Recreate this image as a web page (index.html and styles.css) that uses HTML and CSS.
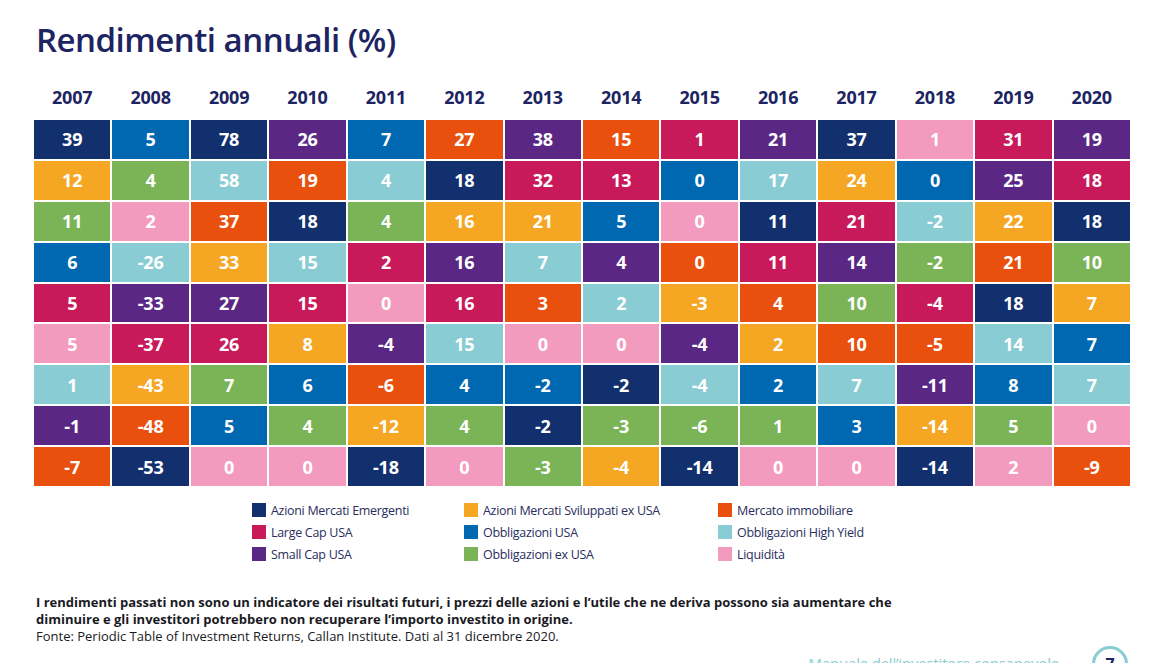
FILE: index.html
```html
<!DOCTYPE html>
<html lang="it">
<head>
<meta charset="utf-8">
<title>Rendimenti annuali (%)</title>
<link rel="stylesheet" href="styles.css">
</head>
<body>
<div class="page">
  <h1 class="title">Rendimenti annuali (%)</h1>

  <div class="years">
    <span>2007</span><span>2008</span><span>2009</span><span>2010</span><span>2011</span><span>2012</span><span>2013</span><span>2014</span><span>2015</span><span>2016</span><span>2017</span><span>2018</span><span>2019</span><span>2020</span>
  </div>

  <div class="grid">
    <!-- row 1 -->
    <div class="c em">39</div><div class="c ob">5</div><div class="c em">78</div><div class="c sc">26</div><div class="c ob">7</div><div class="c re">27</div><div class="c sc">38</div><div class="c re">15</div><div class="c lc">1</div><div class="c sc">21</div><div class="c em">37</div><div class="c lq">1</div><div class="c lc">31</div><div class="c sc">19</div>
    <!-- row 2 -->
    <div class="c dv">12</div><div class="c ox">4</div><div class="c hy">58</div><div class="c re">19</div><div class="c hy">4</div><div class="c em">18</div><div class="c lc">32</div><div class="c lc">13</div><div class="c ob">0</div><div class="c hy">17</div><div class="c dv">24</div><div class="c ob">0</div><div class="c sc">25</div><div class="c lc">18</div>
    <!-- row 3 -->
    <div class="c ox">11</div><div class="c lq">2</div><div class="c re">37</div><div class="c em">18</div><div class="c ox">4</div><div class="c dv">16</div><div class="c dv">21</div><div class="c ob">5</div><div class="c lq">0</div><div class="c em">11</div><div class="c lc">21</div><div class="c hy">-2</div><div class="c dv">22</div><div class="c em">18</div>
    <!-- row 4 -->
    <div class="c ob">6</div><div class="c hy">-26</div><div class="c dv">33</div><div class="c hy">15</div><div class="c lc">2</div><div class="c sc">16</div><div class="c hy">7</div><div class="c sc">4</div><div class="c re">0</div><div class="c lc">11</div><div class="c sc">14</div><div class="c ox">-2</div><div class="c re">21</div><div class="c ox">10</div>
    <!-- row 5 -->
    <div class="c lc">5</div><div class="c sc">-33</div><div class="c sc">27</div><div class="c lc">15</div><div class="c lq">0</div><div class="c lc">16</div><div class="c re">3</div><div class="c hy">2</div><div class="c dv">-3</div><div class="c re">4</div><div class="c ox">10</div><div class="c lc">-4</div><div class="c em">18</div><div class="c dv">7</div>
    <!-- row 6 -->
    <div class="c lq">5</div><div class="c lc">-37</div><div class="c lc">26</div><div class="c dv">8</div><div class="c sc">-4</div><div class="c hy">15</div><div class="c lq">0</div><div class="c lq">0</div><div class="c sc">-4</div><div class="c dv">2</div><div class="c re">10</div><div class="c re">-5</div><div class="c hy">14</div><div class="c ob">7</div>
    <!-- row 7 -->
    <div class="c hy">1</div><div class="c dv">-43</div><div class="c ox">7</div><div class="c ob">6</div><div class="c re">-6</div><div class="c ob">4</div><div class="c ob">-2</div><div class="c em">-2</div><div class="c hy">-4</div><div class="c ob">2</div><div class="c hy">7</div><div class="c sc">-11</div><div class="c ob">8</div><div class="c hy">7</div>
    <!-- row 8 -->
    <div class="c sc">-1</div><div class="c re">-48</div><div class="c ob">5</div><div class="c ox">4</div><div class="c dv">-12</div><div class="c ox">4</div><div class="c em">-2</div><div class="c ox">-3</div><div class="c ox">-6</div><div class="c ox">1</div><div class="c ob">3</div><div class="c dv">-14</div><div class="c ox">5</div><div class="c lq">0</div>
    <!-- row 9 -->
    <div class="c re">-7</div><div class="c em">-53</div><div class="c lq">0</div><div class="c lq">0</div><div class="c em">-18</div><div class="c lq">0</div><div class="c ox">-3</div><div class="c dv">-4</div><div class="c em">-14</div><div class="c lq">0</div><div class="c lq">0</div><div class="c em">-14</div><div class="c lq">2</div><div class="c re">-9</div>
  </div>

  <ul class="legend">
    <li><i class="sw em"></i>Azioni Mercati Emergenti</li>
    <li><i class="sw dv"></i>Azioni Mercati Sviluppati ex USA</li>
    <li><i class="sw re"></i>Mercato immobiliare</li>
    <li><i class="sw lc"></i>Large Cap USA</li>
    <li><i class="sw ob"></i>Obbligazioni USA</li>
    <li><i class="sw hy"></i>Obbligazioni High Yield</li>
    <li><i class="sw sc"></i>Small Cap USA</li>
    <li><i class="sw ox"></i>Obbligazioni ex USA</li>
    <li><i class="sw lq"></i>Liquidità</li>
  </ul>

  <div class="notes">
    <p class="warn">I rendimenti passati non sono un indicatore dei risultati futuri, i prezzi delle azioni e l’utile che ne deriva possono sia aumentare che diminuire e gli investitori potrebbero non recuperare l’importo investito in origine.</p>
    <p class="src">Fonte: Periodic Table of Investment Returns, Callan Institute. Dati al 31 dicembre 2020.</p>
  </div>

  <div class="footer">
    <span class="manual">Manuale dell’investitore consapevole</span>
    <span class="pagenum">7</span>
  </div>
</div>
</body>
</html>
```

FILE: styles.css
```css
* { box-sizing: border-box; }

html, body {
  margin: 0;
  padding: 0;
  background: #ffffff;
}

body {
  width: 1170px;
  height: 663px;
  overflow: hidden;
  font-family: "Open Sans", "Liberation Sans", sans-serif;
}

.page {
  padding: 18px 40px 0 34px;
}

.title {
  margin: 0 0 0 2px;
  font-family: "Open Sans", sans-serif;
  font-weight: 600;
  font-size: 33px;
  line-height: 44px;
  letter-spacing: -0.5px;
  color: #1c2462;
}

.years {
  margin-top: 20px;
  display: grid;
  grid-template-columns: repeat(14, 1fr);
  column-gap: 2px;
  width: 1096px;
  height: 30px;
  align-items: center;
}

.years span {
  text-align: center;
  font-weight: 700;
  font-size: 18px;
  color: #1c2462;
  letter-spacing: -0.2px;
}

.grid {
  margin-top: 8px;
  display: grid;
  grid-template-columns: repeat(14, 1fr);
  grid-template-rows: repeat(9, 1fr);
  gap: 2px;
  width: 1096px;
  height: 366px;
}

.c {
  display: flex;
  align-items: center;
  justify-content: center;
  color: #ffffff;
  font-weight: 700;
  font-size: 18px;
  letter-spacing: -0.2px;
}

.em { background: #13306e; }
.ob { background: #0067b1; }
.sc { background: #5a2884; }
.lc { background: #c8195a; }
.re { background: #e9500e; }
.dv { background: #f5a623; }
.ox { background: #7ab457; }
.hy { background: #89ccd3; }
.lq { background: #f39bbf; }

.legend {
  list-style: none;
  margin: 15px 0 0 218px;
  padding: 0;
  display: grid;
  grid-template-columns: 212px 254px auto;
  row-gap: 4px;
}

.legend li {
  display: flex;
  align-items: center;
  gap: 5px;
  height: 18px;
  font-size: 12.5px;
  color: #2a2d5e;
  letter-spacing: -0.3px;
}

.sw {
  display: block;
  width: 14px;
  height: 14px;
  flex: none;
}

.notes {
  margin: 31px 0 0 2px;
  width: 872px;
  color: #1a1a24;
}

.notes p {
  margin: 0;
  font-size: 13px;
  line-height: 17px;
  letter-spacing: 0;
}

.warn { font-weight: 700; }

.footer {
  display: flex;
  align-items: flex-start;
  justify-content: flex-end;
  gap: 33px;
  margin-top: 1px;
  padding-right: 2px;
}

.manual {
  margin-top: 7px;
  font-size: 15px;
  line-height: 20px;
  color: #89ccd3;
  letter-spacing: -0.2px;
}

.pagenum {
  width: 36px;
  height: 36px;
  border: 3px solid #89ccd3;
  border-radius: 50%;
  display: flex;
  justify-content: center;
  align-items: center;
  font-weight: 700;
  font-size: 16px;
  color: #1c2462;
}
```
